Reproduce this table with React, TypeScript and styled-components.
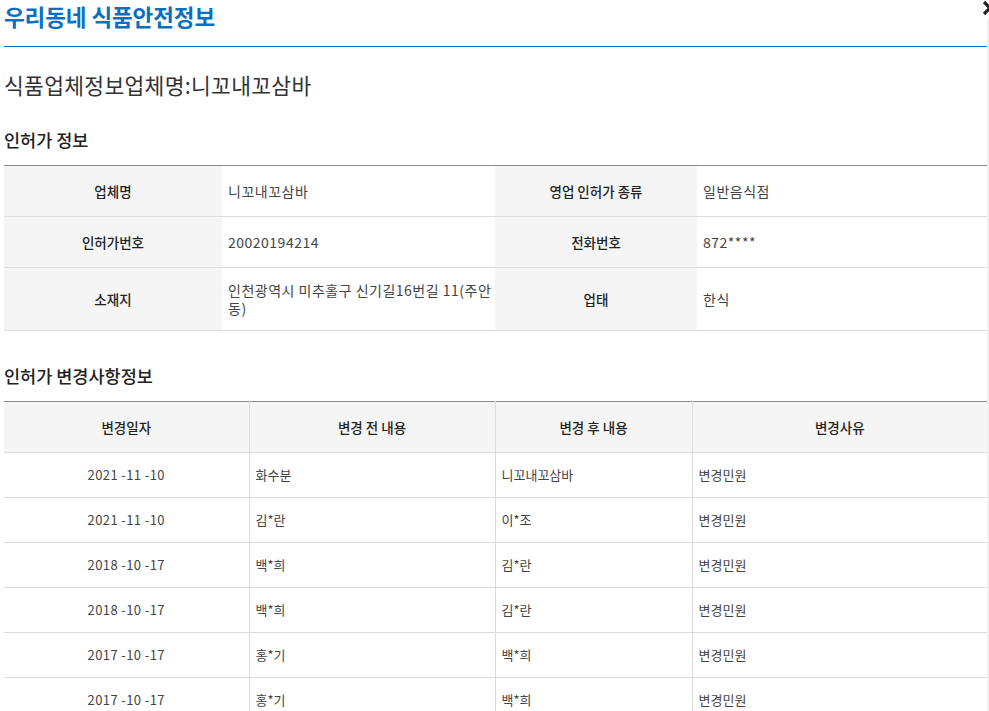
import React from "react";
import styled, { createGlobalStyle } from "styled-components";

const Global = createGlobalStyle`
  html, body { margin: 0; padding: 0; background: #fff; overflow-x: hidden; }
  body { font-family: "Noto Sans CJK KR", "Noto Sans", sans-serif; color: #333; }
  * { box-sizing: border-box; }
`;

const Frame = styled.div`
  position: relative;
  width: 989px;
  min-height: 711px;
  overflow: hidden;
  display: flex;
`;

const Content = styled.div`
  margin-left: 4px;
  width: 983px;
`;

const Strip = styled.div`
  width: 2px;
  background: #efefef;
  margin-top: 18px;
`;

const Close = styled.svg`
  position: absolute;
  top: -1px;
  left: 981px;
  width: 20px;
  height: 20px;
`;

const Header = styled.div`
  height: 47px;
  border-bottom: 1px solid #0b6fc1;
`;

const Title = styled.h1`
  margin: 0;
  font-size: 22.5px;
  line-height: 33px;
  font-weight: 700;
  color: #0b6fc1;
  letter-spacing: -0.1px;
`;

const SubTitle = styled.h2`
  margin: 21px 0 0;
  font-size: 21.5px;
  line-height: 33px;
  font-weight: 400;
  color: #333;
  letter-spacing: 0.3px;
`;

const SectionTitle = styled.h3<{ $top: number }>`
  margin: ${(p) => p.$top}px 0 12px;
  font-size: 17.5px;
  line-height: 26px;
  font-weight: 500;
  color: #222;
`;

const Table = styled.table`
  width: 983px;
  border-collapse: collapse;
  table-layout: fixed;
  border-top: 1px solid #8a8a8a;
  font-size: 13px;
`;

const Th = styled.th<{ $h?: number }>`
  background: #f5f5f5;
  font-weight: 500;
  font-size: 13.5px;
  color: #222;
  text-align: center;
  height: ${(p) => p.$h ?? 51}px;
  padding: 0 6px;
  border-bottom: 1px solid #dcdcdc;
`;

const Td = styled.td<{ $center?: boolean; $h?: number }>`
  height: ${(p) => p.$h ?? 51}px;
  padding: 0 6px;
  color: #444;
  text-align: ${(p) => (p.$center ? "center" : "left")};
  line-height: 18px;
  border-bottom: 1px solid #dcdcdc;
`;

const InfoTd = styled(Td)`
  font-size: 14px;
  letter-spacing: 0.5px;
  padding-right: 2px;
  word-break: break-all;
`;

const HTh = styled(Th)`
  border-left: 1px solid #dcdcdc;
  &:first-child { border-left: none; }
`;

const HTd = styled(Td)<{ $date?: boolean }>`
  border-left: 1px solid #dcdcdc;
  letter-spacing: ${(p) => (p.$date ? "0.4px" : "0")};
  &:first-child { border-left: none; }
`;

const changes = [
  ["2021 -11 -10", "화수분", "니꼬내꼬삼바", "변경민원"],
  ["2021 -11 -10", "김*란", "이*조", "변경민원"],
  ["2018 -10 -17", "백*희", "김*란", "변경민원"],
  ["2018 -10 -17", "백*희", "김*란", "변경민원"],
  ["2017 -10 -17", "홍*기", "백*희", "변경민원"],
  ["2017 -10 -17", "홍*기", "백*희", "변경민원"],
];

export default function App() {
  return (
    <>
      <Global />
      <Frame>
        <Content>
          <Header>
            <Title>우리동네 식품안전정보</Title>
          </Header>
          <SubTitle>식품업체정보업체명:니꼬내꼬삼바</SubTitle>
          <SectionTitle $top={26}>인허가 정보</SectionTitle>
          <Table>
            <colgroup>
              <col style={{ width: 218 }} />
              <col style={{ width: 273 }} />
              <col style={{ width: 202 }} />
              <col style={{ width: 290 }} />
            </colgroup>
            <tbody>
              <tr>
                <Th>업체명</Th>
                <InfoTd>니꼬내꼬삼바</InfoTd>
                <Th>영업 인허가 종류</Th>
                <InfoTd>일반음식점</InfoTd>
              </tr>
              <tr>
                <Th>인허가번호</Th>
                <InfoTd>20020194214</InfoTd>
                <Th>전화번호</Th>
                <InfoTd>872****</InfoTd>
              </tr>
              <tr>
                <Th $h={63}>소재지</Th>
                <InfoTd $h={63}>인천광역시 미추홀구 신기길16번길 11(주안동)</InfoTd>
                <Th $h={63}>업태</Th>
                <InfoTd $h={63}>한식</InfoTd>
              </tr>
            </tbody>
          </Table>
          <SectionTitle $top={32}>인허가 변경사항정보</SectionTitle>
          <Table>
            <colgroup>
              <col style={{ width: 245 }} />
              <col style={{ width: 246 }} />
              <col style={{ width: 197 }} />
              <col style={{ width: 295 }} />
            </colgroup>
            <thead>
              <tr>
                <HTh>변경일자</HTh>
                <HTh>변경 전 내용</HTh>
                <HTh>변경 후 내용</HTh>
                <HTh>변경사유</HTh>
              </tr>
            </thead>
            <tbody>
              {changes.map((r, i) => (
                <tr key={i}>
                  <HTd $h={45} $center $date>{r[0]}</HTd>
                  <HTd $h={45}>{r[1]}</HTd>
                  <HTd $h={45}>{r[2]}</HTd>
                  <HTd $h={45}>{r[3]}</HTd>
                </tr>
              ))}
            </tbody>
          </Table>
        </Content>
        <Strip />
        <Close viewBox="0 0 20 20">
          <path d="M3 3 L15 15 M15 3 L3 15" stroke="#222" strokeWidth="3.2" fill="none" />
        </Close>
      </Frame>
    </>
  );
}
